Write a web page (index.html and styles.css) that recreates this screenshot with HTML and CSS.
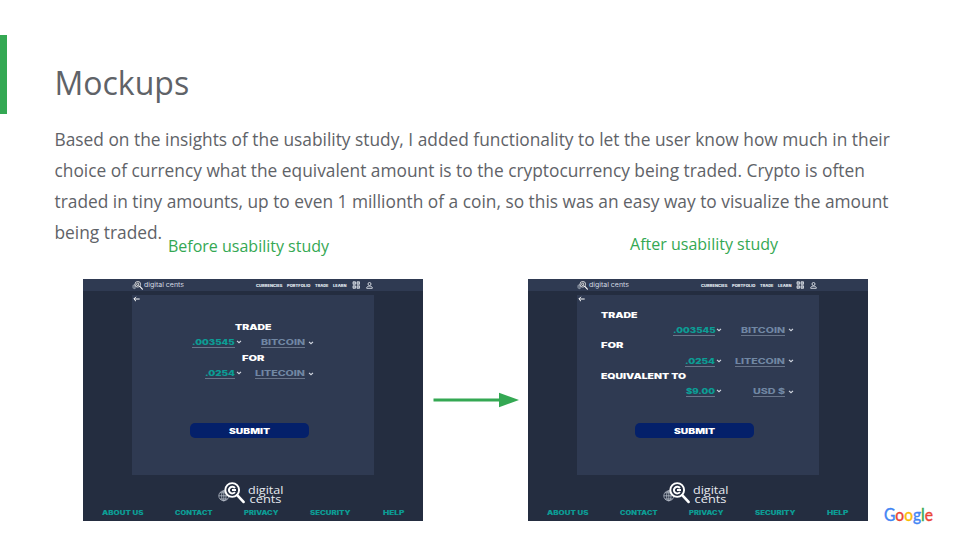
FILE: index.html
```html
<!DOCTYPE html>
<html lang="en">
<head>
<meta charset="utf-8">
<title>Mockups</title>
<link rel="stylesheet" href="styles.css">
</head>
<body>
<svg class="defs" width="0" height="0" aria-hidden="true">
  <symbol id="logo" viewBox="0 0 27 22">
    <g fill="none" stroke="#c3cad6" stroke-width=".7">
      <circle cx="5.800" cy="13.800" r="5"/><ellipse cx="5.800" cy="13.800" rx="2.200" ry="5"/><path d="M.8 13.800h10M5.800 8.800v10M2 10.800h7.500M2 17h7.500"/>
    </g>
    <circle cx="14.200" cy="8" r="6.900" fill="#242d40" stroke="#fff" stroke-width="1.900"/>
    <path d="M19.200 13.200l6.300 6.700" stroke="#fff" stroke-width="2.700" stroke-linecap="round"/>
    <path d="M16.900 6.200a3.300 3.300 0 1 0 0 3.800M14 8h4" fill="none" stroke="#fff" stroke-width="2"/>
  </symbol>
  <symbol id="chev" viewBox="0 0 6 4"><path d="M1 .8l2 1.900 2-1.900" fill="none" stroke="#d4d9e2" stroke-width="1.100"/></symbol>
  <symbol id="back" viewBox="0 0 7 6"><path d="M6.700 3H1M3 .8L.8 3 3 5.200" fill="none" stroke="#fff" stroke-width="1"/></symbol>
  <symbol id="grid" viewBox="0 0 8 8"><path d="M1 .8h2.500v2.500H1zM5 .8h2.500v2.500H5zM1 4.800h2.500v2.500H1zM5 4.800h2.500v2.500H5z" fill="#8b94a5" stroke="#dfe3ea" stroke-width=".8"/></symbol>
  <symbol id="user" viewBox="0 0 7 7"><path d="M.7 6.300v-.6c0-2 5.600-2 5.600 0v.6z" fill="none" stroke="#dfe3ea" stroke-width=".9"/><circle cx="3.500" cy="2" r="1.500" fill="none" stroke="#dfe3ea" stroke-width=".9"/></symbol>
</svg>
<main class="slide">
  <header class="heading"><h1>Mockups</h1></header>
  <p class="copy">Based on the insights of the usability study, I added functionality to let the user know how much in their<br>choice of currency what the equivalent amount is to the cryptocurrency being traded. Crypto is often<br>traded in tiny amounts, up to even 1 millionth of a coin, so this was an easy way to visualize the amount<br>being traded.</p>
  <section class="compare">
    <figure class="before">
      <figcaption>Before usability study</figcaption>
      <div class="screen">
        <div class="topbar">
          <svg class="mini" width="11" height="9"><use href="#logo"/></svg>
          <svg class="brand" width="41" height="9"><text y="6.300" textLength="40" lengthAdjust="spacingAndGlyphs">digital cents</text></svg>
          <nav>
            <svg width="26.500" height="5"><text y="4" textLength="26.500" lengthAdjust="spacingAndGlyphs">CURRENCIES</text></svg>
            <svg width="23.500" height="5"><text y="4" textLength="23.500" lengthAdjust="spacingAndGlyphs">PORTFOLIO</text></svg>
            <svg width="13.500" height="5"><text y="4" textLength="13.500" lengthAdjust="spacingAndGlyphs">TRADE</text></svg>
            <svg width="13.500" height="5"><text y="4" textLength="13.500" lengthAdjust="spacingAndGlyphs">LEARN</text></svg>
          </nav>
          <svg class="ic-grid" width="8" height="8"><use href="#grid"/></svg>
          <svg class="ic-user" width="7" height="7"><use href="#user"/></svg>
        </div>
        <div class="panel">
          <svg class="back" width="7" height="6"><use href="#back"/></svg>
          <div class="rows">
            <div class="row label"><svg width="36.500" height="11"><text y="8" textLength="36.500" lengthAdjust="spacingAndGlyphs">TRADE</text></svg></div>
            <div class="row value">
              <svg class="amount" width="42.500" height="11"><text y="8" textLength="42.500" lengthAdjust="spacingAndGlyphs">.003545</text></svg><svg class="chev" width="6" height="4"><use href="#chev"/></svg>
              <svg class="coin" width="44" height="11"><text y="8" textLength="44" lengthAdjust="spacingAndGlyphs">BITCOIN</text></svg><svg class="chev" width="6" height="4"><use href="#chev"/></svg>
            </div>
            <div class="row label"><svg width="22.500" height="11"><text y="8" textLength="22.500" lengthAdjust="spacingAndGlyphs">FOR</text></svg></div>
            <div class="row value">
              <svg class="amount" width="30" height="11"><text y="8" textLength="30" lengthAdjust="spacingAndGlyphs">.0254</text></svg><svg class="chev" width="6" height="4"><use href="#chev"/></svg>
              <svg class="coin" width="50" height="11"><text y="8" textLength="50" lengthAdjust="spacingAndGlyphs">LITECOIN</text></svg><svg class="chev" width="6" height="4"><use href="#chev"/></svg>
            </div>
          </div>
          <div class="submit"><svg width="41" height="11"><text y="8" textLength="41" lengthAdjust="spacingAndGlyphs">SUBMIT</text></svg></div>
        </div>
        <div class="footer">
          <div class="footlogo"><svg width="27" height="22"><use href="#logo"/></svg><svg class="wordmark" width="37" height="22"><text x="0" y="12.300" textLength="35.500" lengthAdjust="spacingAndGlyphs">digital</text><text x="1.500" y="20.500" textLength="32" lengthAdjust="spacingAndGlyphs">cents</text></svg></div>
          <div class="links">
            <svg width="41.500" height="7"><text y="5.200" textLength="41.500" lengthAdjust="spacingAndGlyphs">ABOUT US</text></svg>
            <svg width="37.500" height="7"><text y="5.200" textLength="37.500" lengthAdjust="spacingAndGlyphs">CONTACT</text></svg>
            <svg width="34.500" height="7"><text y="5.200" textLength="34.500" lengthAdjust="spacingAndGlyphs">PRIVACY</text></svg>
            <svg width="40.500" height="7"><text y="5.200" textLength="40.500" lengthAdjust="spacingAndGlyphs">SECURITY</text></svg>
            <svg width="21.500" height="7"><text y="5.200" textLength="21.500" lengthAdjust="spacingAndGlyphs">HELP</text></svg>
          </div>
        </div>
      </div>
    </figure>
    <svg class="arrow" width="87" height="16"><path d="M.5 8h67" stroke="#34a853" stroke-width="3"/><path d="M66 .8L86 8 66 15.200z" fill="#34a853"/></svg>
    <figure class="after">
      <figcaption>After usability study</figcaption>
      <div class="screen">
        <div class="topbar">
          <svg class="mini" width="11" height="9"><use href="#logo"/></svg>
          <svg class="brand" width="41" height="9"><text y="6.300" textLength="40" lengthAdjust="spacingAndGlyphs">digital cents</text></svg>
          <nav>
            <svg width="26.500" height="5"><text y="4" textLength="26.500" lengthAdjust="spacingAndGlyphs">CURRENCIES</text></svg>
            <svg width="23.500" height="5"><text y="4" textLength="23.500" lengthAdjust="spacingAndGlyphs">PORTFOLIO</text></svg>
            <svg width="13.500" height="5"><text y="4" textLength="13.500" lengthAdjust="spacingAndGlyphs">TRADE</text></svg>
            <svg width="13.500" height="5"><text y="4" textLength="13.500" lengthAdjust="spacingAndGlyphs">LEARN</text></svg>
          </nav>
          <svg class="ic-grid" width="8" height="8"><use href="#grid"/></svg>
          <svg class="ic-user" width="7" height="7"><use href="#user"/></svg>
        </div>
        <div class="panel">
          <svg class="back" width="7" height="6"><use href="#back"/></svg>
          <div class="rows">
            <div class="row label"><svg width="36.500" height="11"><text y="8" textLength="36.500" lengthAdjust="spacingAndGlyphs">TRADE</text></svg></div>
            <div class="row value">
              <svg class="amount" width="42.500" height="11"><text y="8" textLength="42.500" lengthAdjust="spacingAndGlyphs">.003545</text></svg><svg class="chev" width="6" height="4"><use href="#chev"/></svg>
              <svg class="coin" width="44" height="11"><text y="8" textLength="44" lengthAdjust="spacingAndGlyphs">BITCOIN</text></svg><svg class="chev" width="6" height="4"><use href="#chev"/></svg>
            </div>
            <div class="row label"><svg width="22.500" height="11"><text y="8" textLength="22.500" lengthAdjust="spacingAndGlyphs">FOR</text></svg></div>
            <div class="row value">
              <svg class="amount" width="30" height="11"><text y="8" textLength="30" lengthAdjust="spacingAndGlyphs">.0254</text></svg><svg class="chev" width="6" height="4"><use href="#chev"/></svg>
              <svg class="coin" width="50" height="11"><text y="8" textLength="50" lengthAdjust="spacingAndGlyphs">LITECOIN</text></svg><svg class="chev" width="6" height="4"><use href="#chev"/></svg>
            </div>
            <div class="row label"><svg width="85" height="11"><text y="8" textLength="85" lengthAdjust="spacingAndGlyphs">EQUIVALENT TO</text></svg></div>
            <div class="row value">
              <svg class="amount" width="29" height="11"><text y="8" textLength="29" lengthAdjust="spacingAndGlyphs">$9.00</text></svg><svg class="chev" width="6" height="4"><use href="#chev"/></svg>
              <svg class="coin" width="32" height="11"><text y="8" textLength="32" lengthAdjust="spacingAndGlyphs">USD $</text></svg><svg class="chev" width="6" height="4"><use href="#chev"/></svg>
            </div>
          </div>
          <div class="submit"><svg width="41" height="11"><text y="8" textLength="41" lengthAdjust="spacingAndGlyphs">SUBMIT</text></svg></div>
        </div>
        <div class="footer">
          <div class="footlogo"><svg width="27" height="22"><use href="#logo"/></svg><svg class="wordmark" width="37" height="22"><text x="0" y="12.300" textLength="35.500" lengthAdjust="spacingAndGlyphs">digital</text><text x="1.500" y="20.500" textLength="32" lengthAdjust="spacingAndGlyphs">cents</text></svg></div>
          <div class="links">
            <svg width="41.500" height="7"><text y="5.200" textLength="41.500" lengthAdjust="spacingAndGlyphs">ABOUT US</text></svg>
            <svg width="37.500" height="7"><text y="5.200" textLength="37.500" lengthAdjust="spacingAndGlyphs">CONTACT</text></svg>
            <svg width="34.500" height="7"><text y="5.200" textLength="34.500" lengthAdjust="spacingAndGlyphs">PRIVACY</text></svg>
            <svg width="40.500" height="7"><text y="5.200" textLength="40.500" lengthAdjust="spacingAndGlyphs">SECURITY</text></svg>
            <svg width="21.500" height="7"><text y="5.200" textLength="21.500" lengthAdjust="spacingAndGlyphs">HELP</text></svg>
          </div>
        </div>
      </div>
    </figure>
    <svg class="google" width="50" height="20"><text x="0" y="14.500" textLength="49" lengthAdjust="spacingAndGlyphs"><tspan fill="#4285f4" stroke="#4285f4">G</tspan><tspan fill="#ea4335" stroke="#ea4335">o</tspan><tspan fill="#fbbc05" stroke="#fbbc05">o</tspan><tspan fill="#4285f4" stroke="#4285f4">g</tspan><tspan fill="#34a853" stroke="#34a853">l</tspan><tspan fill="#ea4335" stroke="#ea4335">e</tspan></text></svg>
  </section>
</main>
</body>
</html>
```
FILE: styles.css
```css
* { box-sizing: border-box; }
body { margin: 0; background: #fff; font-family: "Open Sans", sans-serif; color: #5f6368; }
svg { display: block; flex: none; overflow: visible; }
.defs { position: absolute; }
.slide { width: 960px; height: 540px; overflow: hidden; padding-top: 34.5px; }
.heading { height: 79px; border-left: 7px solid #34a853; padding: 26px 0 0 47.500px; }
h1 { margin: 0; font-size: 32px; line-height: 44px; font-weight: 400; }
.copy { margin: 10px 0 0 54.500px; height: 123.500px; font-size: 17.330px; line-height: 31px; white-space: nowrap; }
.compare { display: flex; height: 292px; margin-top: -14px; padding-left: 83px; }
figure { margin: 0; width: 340px; flex: none; }
figcaption { height: 46px; font-size: 16px; line-height: 22px; color: #34a853; white-space: nowrap; }
.before figcaption { padding: 2px 0 0 85px; }
.after figcaption { padding-left: 102.500px; }
.arrow { margin: 159px 7.600px 0 10px; }
.google { margin: 273px 0 0 16px; font: 400 16.500px Lato, sans-serif; stroke-width: .4px; }

.screen { width: 340px; height: 242px; background: #242d40; font-family: Inter, sans-serif; fill: #fff; }
.topbar { display: flex; align-items: center; height: 12px; background: #2f3a52; padding-left: 49px; }
.brand { margin-left: 1px; font: 400 6.500px Inter, sans-serif; fill: #d5dae3; }
.mini { width: 11px; }
nav { display: flex; gap: 4.500px; margin-left: 71px; font-size: 3.500px; font-weight: 900; fill: #dfe3ea; }
.ic-grid { margin-left: 5px; }
.ic-user { margin-left: 6px; }
.panel { display: flex; flex-direction: column; width: 242px; height: 180px; margin: 3.500px 0 0 49px; background: #2f3a52; }
.back { margin: 1px 0 0.5px 1px; }
.rows { height: 120px; font-size: 7.300px; font-weight: 900; }
.before .rows { padding-top: 20px; }
.after .rows { padding-top: 7.500px; }
.row { display: flex; height: 15.400px; }
.before .label { justify-content: center; }
.after .label { padding-left: 24px; }
.value { display: grid; grid-template-columns: 102.500px 10px 60px 10px; }
.after .value { grid-template-columns: 138.500px 10px 60px 10px; }
.amount, .coin { justify-self: end; height: 11px; border-bottom: 1px solid #69758a; }
.amount { fill: #0c9c94; }
.coin { fill: #7187a3; font-weight: 800; }
.chev { margin: 3px 0 0 1px; }
.coin + .chev { margin-left: 3px; margin-top: 3.500px; }
.submit { display: flex; justify-content: center; width: 119px; height: 15.500px; margin: 0.5px 0 0 58.300px; padding-top: 3.500px; background: #04206a; border-radius: 5px; font-size: 7.300px; font-weight: 900; }
.footer { height: 46px; padding-top: 7.500px; }
.footlogo { display: flex; gap: 3px; padding-left: 135px; }
.wordmark { font-family: "Open Sans", sans-serif; font-size: 10.500px; fill: #e8ebf0; }
.links { display: flex; justify-content: space-between; width: 302px; margin: 6px 0 0 19px; font-size: 5.600px; font-weight: 900; fill: #0c9c94; }
```
